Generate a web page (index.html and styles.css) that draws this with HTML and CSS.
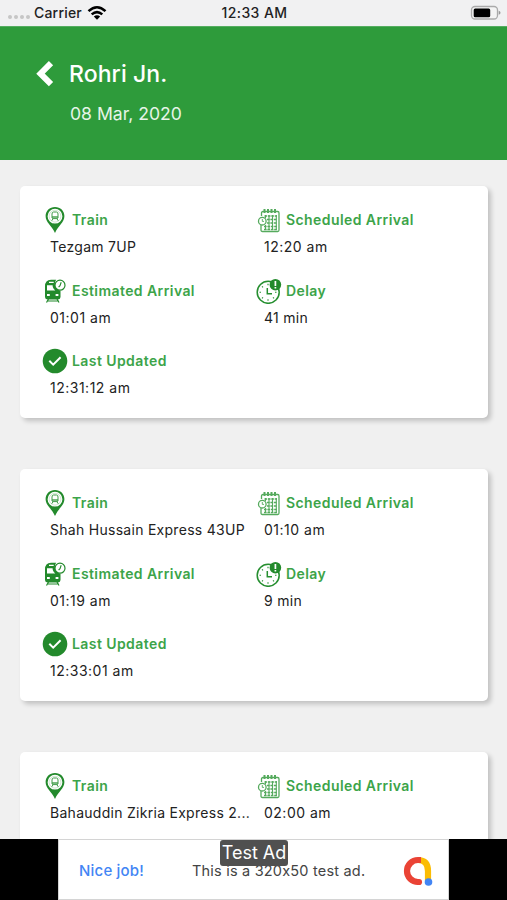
FILE: index.html
```html
<!DOCTYPE html>
<html lang="en">
<head>
<meta charset="utf-8">
<title>Rohri Jn.</title>
<link rel="stylesheet" href="styles.css">
</head>
<body>
<svg class="sprite" aria-hidden="true">
  <symbol id="pin" viewBox="0 0 26 26">
    <path fill="#238a2c" fill-rule="evenodd" d="M13 0C7.600 0 3.600 3.900 3.600 9c0 6.500 6 9.200 9.400 17 3.400-7.800 9.400-10.500 9.400-17C22.400 3.900 18.400 0 13 0zm0 1.800a7.400 7.400 0 1 1 0 14.800 7.400 7.400 0 0 1 0-14.800z"/>
    <g fill="none" stroke="#3f9c48"><circle cx="13" cy="9.200" r="5.900" stroke-width=".4" opacity=".6"/><path d="M10 11V7q0-2 1.500-2h3Q16 5 16 7v4l-1 .6h-4zM10.900 12l-1.200 1.800M15.100 12l1.200 1.800" stroke-width="1"/><path d="M10 10h6" stroke-width="1.400"/></g>
  </symbol>
  <symbol id="calendar" viewBox="0 0 26 26">
    <g fill="none" stroke="#55aa5d"><path d="M5.500 9V6q0-1.500 1.500-1.500h14.700Q23 4.500 23 6v17q0 1.500-1.300 1.500H6.500Q5 24.500 5 23v-5" stroke-width="1.300"/><path d="M8.500 2v4M12 2v4M15.500 2v4M19 2v4" stroke-width="2"/><path d="M8.500 9H21M11 12.500h10M11 16h10M8 19.500h13M8 22.500h13" stroke-width="1.300" stroke-dasharray="2.600 .8"/><path d="M9.500 8v3M13 8v15M16.500 8v15M20.300 8v15M9.500 18v5" stroke-width="1.100"/><circle cx="6.300" cy="14.200" r="3.800" stroke-width="1.300"/><path d="M6.300 12v2.400H8" stroke-width=".9"/></g>
  </symbol>
  <symbol id="train" viewBox="0 0 26 26">
    <path fill="#238a2c" fill-rule="evenodd" d="M3 8.500Q3 1.800 9 1.800h5.200C11.500 5.500 13 11 18.500 12.800V19q0 2.400-2.400 2.400H5.400Q3 21.400 3 19zM7 3.700v1.200h4.700V3.700zM5 7.300v5.200h8.300c-1.900-1.600-2.700-3-2.700-5.200zM5 16v2h2.800v-2zm8.600 0v2h2.800v-2z"/>
    <path d="M6.500 21l-2 3.500M15 21l2 3.500M4.800 23h12" fill="none" stroke="#238a2c" stroke-width="1.200"/>
    <circle cx="18" cy="7.200" r="5" fill="#fff" stroke="#238a2c" stroke-width="1.200"/><path d="M19.200 4.200L18 7.600l-1.400 1.600" fill="none" stroke="#238a2c" stroke-width="1.100"/>
  </symbol>
  <symbol id="delay" viewBox="0 0 26 26">
    <circle cx="12.200" cy="14.300" r="11" fill="none" stroke="#268f30" stroke-width="1.500"/>
    <path d="M11.300 10v5.700h4.700" fill="none" stroke="#268f30" stroke-width="1.500"/>
    <path d="M12 5.800v1.500M12 21.300v1.500M3.500 14.300H5M19 14.300h1.500M6 8.300l1 1M6 20.300l1-1M18 20.300l-1-1" stroke="#268f30" stroke-width="1.100"/>
    <circle cx="19.400" cy="6.700" r="5.800" fill="#238a2c"/><path d="M19.400 3v5M19.400 9v1.600" stroke="#fff" stroke-width="1.700"/>
  </symbol>
  <symbol id="check" viewBox="0 0 26 26">
    <circle cx="13" cy="13" r="12.300" fill="#238a2c"/><path d="M7.300 12.800l3.900 3.900 7.400-7.400" fill="none" stroke="#fff" stroke-width="2"/>
  </symbol>
</svg>
<div class="screen">
  <div class="status">
    <div class="carrier">
      <span class="dots"><i></i><i></i><i></i><i></i></span>
      <span>Carrier</span>
      <svg class="wifi" width="20" height="16" viewBox="0 0 20 16"><g fill="none" stroke="#000" stroke-width="2.500"><path d="M1.500 6.200q8.500-7.800 17 0"/><path d="M4.700 9.400q5.300-4.600 10.600 0"/></g><path d="M6.800 11.500q3.200-2.500 6.400 0L10 14.800z"/></svg>
    </div>
    <div class="clock">12:33 AM</div>
    <svg class="battery" width="31" height="16" viewBox="0 0 31 16"><rect x="1.500" y="1.500" width="26" height="12.500" rx="3.500" fill="#f4f4f4" stroke="#aaa" stroke-width="1.300"/><rect x="3.700" y="3.500" width="16.500" height="8.700" rx="1.500"/><path d="M28.700 5.700q1.800.5 1.800 2t-1.800 2z" fill="#999"/></svg>
  </div>
  <header class="header">
    <svg class="back" width="20" height="28" viewBox="0 0 20 28"><path d="M16 3.200L5.500 13.700 16 24.200" fill="none" stroke="#fff" stroke-width="6"/></svg>
    <div><h1>Rohri Jn.</h1><p>08 Mar, 2020</p></div>
  </header>
  <main class="list">
    <section class="card">
      <div class="field"><div class="label"><svg><use href="#pin"/></svg><span>Train</span></div><div class="value">Tezgam 7UP</div></div>
      <div class="field"><div class="label"><svg><use href="#calendar"/></svg><span>Scheduled Arrival</span></div><div class="value time">12:20 am</div></div>
      <div class="field"><div class="label"><svg><use href="#train"/></svg><span>Estimated Arrival</span></div><div class="value time">01:01 am</div></div>
      <div class="field"><div class="label"><svg><use href="#delay"/></svg><span>Delay</span></div><div class="value">41 min</div></div>
      <div class="field"><div class="label"><svg><use href="#check"/></svg><span>Last Updated</span></div><div class="value time">12:31:12 am</div></div>
    </section>
    <section class="card">
      <div class="field"><div class="label"><svg><use href="#pin"/></svg><span>Train</span></div><div class="value">Shah Hussain Express 43UP</div></div>
      <div class="field"><div class="label"><svg><use href="#calendar"/></svg><span>Scheduled Arrival</span></div><div class="value time">01:10 am</div></div>
      <div class="field"><div class="label"><svg><use href="#train"/></svg><span>Estimated Arrival</span></div><div class="value time">01:19 am</div></div>
      <div class="field"><div class="label"><svg><use href="#delay"/></svg><span>Delay</span></div><div class="value">9 min</div></div>
      <div class="field"><div class="label"><svg><use href="#check"/></svg><span>Last Updated</span></div><div class="value time">12:33:01 am</div></div>
    </section>
    <section class="card">
      <div class="field"><div class="label"><svg><use href="#pin"/></svg><span>Train</span></div><div class="value">Bahauddin Zikria Express 2...</div></div>
      <div class="field"><div class="label"><svg><use href="#calendar"/></svg><span>Scheduled Arrival</span></div><div class="value time">02:00 am</div></div>
    </section>
  </main>
  <footer class="ad-bar">
    <div class="ad">
      <span class="nice">Nice job!</span>
      <span class="copy">This is a 320x50 test ad.</span>
      <svg class="admob" width="32" height="32" viewBox="0 0 32 32"><g fill="none" stroke-width="6.200"><path d="M16 5q10 0 10 11v10" stroke="#fbbc04"/><path d="M19 5h-3a11 11 0 0 0 0 22h1" stroke="#ea4335"/></g><circle cx="17" cy="27" r="3.100" fill="#ea4335"/><circle cx="26.500" cy="27" r="3.800" fill="#4285f4"/></svg>
      <span class="badge">Test Ad</span>
    </div>
  </footer>
</div>
</body>
</html>
```
FILE: styles.css
```css
* { box-sizing: border-box; }
body { margin: 0; font-family: Inter, "Liberation Sans", sans-serif; color: #222; }
.sprite { display: none; }
.screen { width: 507px; height: 900px; overflow: hidden; display: flex; flex-direction: column; background: #f0f0f0; }
.status { flex: none; height: 26px; display: grid; grid-template-columns: 1fr auto 1fr; align-items: center; padding: 0 6px 1px 8px; font-size: 14px; font-weight: 500; color: #222; background: #f1f1f2; }
.carrier { display: flex; align-items: center; }
.carrier span { white-space: nowrap; letter-spacing: .2px; }
.clock { letter-spacing: .4px; }
.dots { display: flex; gap: 2px; margin-right: 4px; padding-top: 9px; }
.dots i { width: 4px; height: 4px; border-radius: 50%; background: #c6c6c6; }
.wifi { margin-left: 5px; }
.battery { justify-self: end; }
.header { flex: none; height: 134px; display: flex; padding: 34px 0 0 35px; gap: 14px; background: #2e9b3b; color: #fff; box-shadow: inset 0 1px #55ad60; }
.header h1 { margin: 0; font-size: 23px; line-height: 28px; font-weight: 500; letter-spacing: .1px; }
.header p { margin: 13px 0 0 1px; font-size: 17.600px; line-height: 26px; color: #e6f5e8; }
.list { flex: 1; min-height: 0; overflow: hidden; padding: 26px 20px 0; display: flex; flex-direction: column; gap: 51px; }
.card { flex: none; width: 467.500px; height: 232px; display: grid; grid-template-columns: 214px 1fr; grid-template-rows: 71px 70px 70px; padding: 21px 0 0 22px; border-radius: 5px; background: #fff; box-shadow: 3px 3px 5px rgba(0,0,0,.2); }
.label { display: flex; align-items: center; gap: 4px; height: 26px; font-size: 14px; font-weight: 600; letter-spacing: .42px; color: #3ca449; }
.label span { padding-bottom: 1px; }
.label svg { flex: none; width: 26px; height: 26px; }
.value { padding-left: 8px; font-size: 14px; line-height: 28px; letter-spacing: .28px; white-space: nowrap; }
.time { letter-spacing: .5px; }
.ad-bar { flex: none; height: 61px; display: flex; padding-left: 58px; background: #000; }
.ad { position: relative; width: 391px; display: flex; align-items: center; padding: 2px 14px 0 20px; background: #fff; border: 1px solid #d4d4d4; font-size: 15px; }
.nice { width: 113px; color: #4285f4; font-weight: 500; letter-spacing: .2px; }
.copy { color: #444; font-size: 14.500px; letter-spacing: .2px; font-feature-settings: "calt" 0; white-space: nowrap; }
.admob { margin-left: auto; }
.badge { position: absolute; top: 0; left: 161px; width: 68px; height: 26px; border-radius: 3px; background: #505050; color: #fff; font-size: 18px; line-height: 26px; text-align: center; }
```
